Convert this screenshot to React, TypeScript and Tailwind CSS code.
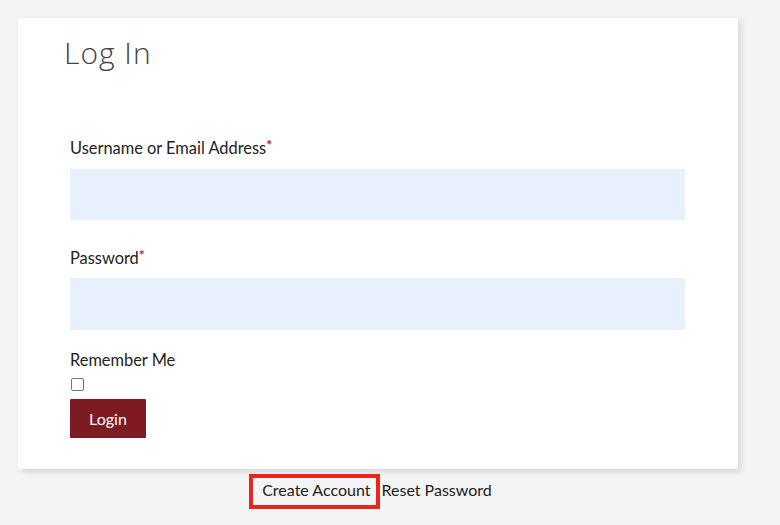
import React from "react";

export default function App() {
  const label = "text-[16.4px] leading-[24px] text-[#222]";
  const star = "text-[#b8202c] text-[14px] leading-none relative top-[-4px] font-bold";
  return (
    <div className="min-h-[525px] w-[780px] bg-[#f4f4f4] pt-[18px] font-['Lato','Open_Sans',sans-serif]">
      <div className="ml-[18px] w-[720px] h-[451px] bg-white rounded-[3px] shadow-[3px_3px_6px_rgba(0,0,0,0.12)] flex flex-col">
        <h1 className="mt-[17px] ml-[46px] text-[30px] leading-[36px] font-light text-[#444] tracking-[1px] font-['Open_Sans',sans-serif]">
          Log In
        </h1>
        <form className="ml-[52px] mt-[65px] w-[615px] flex flex-col">
          <label className={label}>
            Username or Email Address<span className={star}>*</span>
          </label>
          <div className="mt-[9px] h-[51px] bg-[#e8f0fe]" />
          <label className={`${label} mt-[26px]`}>
            Password<span className={star}>*</span>
          </label>
          <div className="mt-[8px] h-[52px] bg-[#e8f0fe]" />
          <label className={`${label} mt-[18px]`}>Remember Me</label>
          <div className="mt-[6px] w-[13px] h-[13px] ml-[1px] border border-[#767676] rounded-[2px] bg-white" />
          <button
            type="button"
            className="mt-[8px] w-[76px] h-[39px] bg-[#7d1a22] text-white text-[16px] rounded-[1px]"
          >
            Login
          </button>
        </form>
      </div>
      <div className="w-[720px] ml-[18px] mt-[9px] flex justify-center text-[16px] leading-[24px] text-[#222]">
        <span className="relative ml-[-2px]">
          Create Account
          <span className="absolute left-[-13px] right-[-9px] top-[-4px] bottom-[-7px] border-[4px] border-[#e8261c]" />
        </span>
        <span className="ml-[11px]">Reset Password</span>
      </div>
    </div>
  );
}
